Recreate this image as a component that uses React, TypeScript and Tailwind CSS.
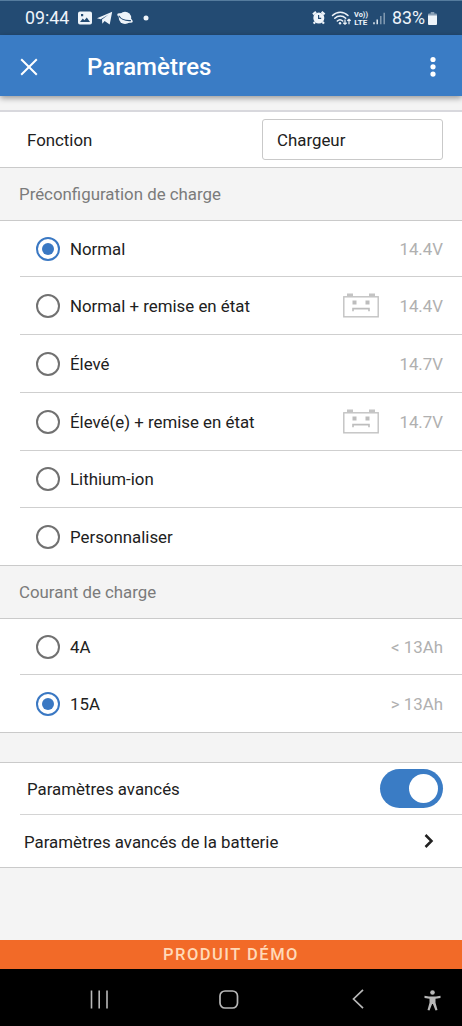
import type { ReactNode } from 'react';

const presets = [
  { label: 'Normal', value: '14.4V', selected: true, height: 'h-14' },
  { label: 'Normal + remise en état', value: '14.4V', recondition: true, height: 'h-[58px]' },
  { label: 'Élevé', value: '14.7V', height: 'h-[58px]' },
  { label: 'Élevé(e) + remise en état', value: '14.7V', recondition: true, height: 'h-[58px]' },
  { label: 'Lithium-ion', height: 'h-[57px]' },
  { label: 'Personnaliser', height: 'h-[58px]' },
];

const currents = [
  { label: '4A', value: '< 13Ah', height: 'h-14' },
  { label: '15A', value: '> 13Ah', selected: true, height: 'h-[58px]' },
];

type Option = {
  label: string;
  value?: string;
  selected?: boolean;
  recondition?: boolean;
  height: string;
};

const BatteryIcon = () => (
  <svg width="36" height="25" viewBox="0 0 36 25" fill="none" className="mr-[20px] shrink-0">
    <rect x="0.8" y="3.8" width="34.4" height="20" stroke="#c2c2c2" strokeWidth="1.4" />
    <path d="M4 0.5h6v3H4zM26 0.5h6v3h-6z" fill="#c4c4c4" />
    <path d="M9.5 7.5h4v4h-4zM22.5 7.5h4v4h-4z" fill="#bdbdbd" />
    <path d="M10 18.2v-2.6h16v2.6" stroke="#bdbdbd" strokeWidth="1.6" />
  </svg>
);

const Radio = ({ selected }: { selected?: boolean }) => (
  <svg width="24" height="24" viewBox="0 0 24 24" fill="none" className="mr-[10px] shrink-0">
    <circle cx="12" cy="12" r="11" stroke={selected ? '#3a78c3' : '#717171'} strokeWidth="2" />
    {selected && <circle cx="12" cy="12" r="6" fill="#3a78c3" />}
  </svg>
);

const SectionTitle = ({ children }: { children: ReactNode }) => (
  <div className="flex h-[53px] items-center border-b border-[#cacaca] bg-[#f4f4f4] pl-[19px] text-[16.85px] text-[#7b7b7b]">
    {children}
  </div>
);

const OptionList = ({ options }: { options: Option[] }) => (
  <div className="border-b border-[#cacaca] bg-white pl-5">
    {options.map((option, index) => (
      <div
        key={option.label}
        className={`flex items-center pr-[19px] pl-4 ${option.height} ${
          index < options.length - 1 ? 'border-b border-[#cfcfcf]' : '-mb-px'
        }`}
      >
        <Radio selected={option.selected} />
        <span className="flex-1">{option.label}</span>
        {option.recondition && <BatteryIcon />}
        <span className="text-[#b0b0b0]">{option.value}</span>
      </div>
    ))}
  </div>
);

const StatusBar = () => (
  <div className="flex h-[35px] items-center border-t border-[#557c9e] bg-[#234b73] pr-[25px] pl-[25px] text-[17.8px] text-[#eef4fa]">
    <span className="w-[53px]">09:44</span>
    <svg width="72" height="14" viewBox="0 0 72 14" fill="#eef4fa">
      <path
        fillRule="evenodd"
        d="M2 0.5h10a2 2 0 0 1 2 2v9a2 2 0 0 1-2 2H2a2 2 0 0 1-2-2v-9a2 2 0 0 1 2-2ZM2 11h10L8.8 6.5 6.4 9.3 4.8 7.6ZM3 3v2.2h2.2V3Z"
      />
      <path d="M19 7.2 34.2 0.8 31.7 13.5 26.6 10.1 24.3 12.7 24 8.4 30.6 3.4 22.7 8.3Z" />
      <ellipse cx="47" cy="7" rx="8.7" ry="2.9" transform="rotate(28 47 7)" />
      <circle cx="47" cy="6.9" r="6.2" />
      <path d="M40.7 4.8c2 3.1 6.5 5.2 12.2 4.8" fill="none" stroke="#234b73" strokeWidth="1.1" />
      <circle cx="68" cy="7" r="2.5" />
    </svg>
    <div className="ml-auto flex items-center">
      <svg width="74" height="16" viewBox="0 0 74 16" fill="none" stroke="#eef4fa">
        <path d="m1 4.4 3-2.6M9.6 1.8l3 2.6M3 12l-1.3 1.6m8.9-1.6 1.3 1.6" strokeWidth="2.2" />
        <circle cx="6.8" cy="8" r="5.5" fill="#eef4fa" stroke="none" />
        <path d="M6.6 5v3.4h2.6" stroke="#234b73" strokeWidth="1.2" />
        <g strokeWidth="1.5" strokeLinecap="round">
          <path d="M20.5 5.5c4.5-4.4 11-4.4 15.5 0M22.8 8.3c3.1-3 7.8-3 10.9 0M25.3 11c1.6-1.5 3.8-1.5 5.4 0" />
        </g>
        <circle cx="28" cy="13.2" r="1.2" fill="#eef4fa" stroke="none" />
        <path d="M33 9.5v4.8m-1.7-1.6 1.7 1.6 1.7-1.6M37 14.3V9m-1.7 1.8L37 9.2l1.7 1.6" strokeWidth="1.2" />
        <g fill="#eef4fa" stroke="none" fontFamily="Roboto" fontWeight="700">
          <text x="42" y="6.6" fontSize="6.6" textLength="14" lengthAdjust="spacingAndGlyphs">Vo))</text>
          <text x="42.3" y="14.8" fontSize="7" textLength="13" lengthAdjust="spacingAndGlyphs">LTE</text>
        </g>
        <path d="M62 14.3v-2M65.2 14.3V9.6" strokeWidth="1.4" />
        <path d="M68.8 14.3V6M72.2 14.3V2.8" strokeWidth="1.4" opacity="0.5" />
      </svg>
      <span className="ml-[6px]">83%</span>
      <svg width="9" height="13" viewBox="0 0 9 13" fill="#eef4fa" className="ml-[3px]">
        <path d="M2.7 0h3.6v1.5H8a1 1 0 0 1 1 1V4H0V2.5a1 1 0 0 1 1-1h1.7Z" opacity="0.5" />
        <path d="M0 3.5h9V12a1 1 0 0 1-1 1H1a1 1 0 0 1-1-1Z" />
      </svg>
    </div>
  </div>
);

const Header = () => (
  <header className="relative flex h-[61px] items-center bg-[#3a7cc5] px-5 pt-0.5 text-white shadow-[0_2px_6px_rgba(0,0,0,0.4)]">
    <svg width="18" height="18" viewBox="0 0 18 18" fill="none" stroke="white" strokeWidth="2">
      <path d="m1.2 1.2 15.6 15.6m0-15.6-15.6 15.6" />
    </svg>
    <h1 className="ml-[49px] flex-1 text-[24px] font-medium">Paramètres</h1>
    <svg width="6" height="22" viewBox="0 0 6 22" fill="white" className="mr-[6px]">
      <circle cx="3" cy="3.5" r="2.6" />
      <circle cx="3" cy="10.8" r="2.6" />
      <circle cx="3" cy="18.1" r="2.6" />
    </svg>
  </header>
);

const NavBar = () => (
  <nav className="flex h-[57px] items-center bg-black pr-[21px] pl-[90px]">
    <svg width="18" height="19" viewBox="0 0 18 19" stroke="#b8b8b8" strokeWidth="1.6" className="mt-[4px]">
      <path d="M1.5 0.5v18M9.2 0.5v18M17 0.5v18" />
    </svg>
    <svg width="20" height="19" viewBox="0 0 20 19" fill="none" stroke="#b8b8b8" strokeWidth="1.7" className="mt-[4px] ml-[111px]">
      <rect x="1" y="1" width="17.5" height="17" rx="5" />
    </svg>
    <svg width="12" height="20" viewBox="0 0 12 20" fill="none" stroke="#b8b8b8" strokeWidth="1.7" className="mt-[3px] ml-[113px]">
      <path d="m11 0.8-9.5 9.2 9.5 9.2" />
    </svg>
    <svg width="17" height="21" viewBox="0 0 17 21" fill="#b8b8b8" className="mt-[6px] ml-auto">
      <circle cx="8.5" cy="2.5" r="2.3" />
      <path d="M0.5 5.8 5 6.5h7l4.5-.7v2.1l-5 .8v4l2 7.2-2 .7-2.6-6.5h-.8l-2.6 6.5-2-.7 2-7.2v-4l-5-.8Z" />
    </svg>
  </nav>
);

const App = () => {
  return (
    <div className="flex h-[1026px] w-[462px] flex-col overflow-hidden bg-[#f4f4f4] font-['Roboto',sans-serif] text-[16.85px] leading-6 text-[#212121]">
      <StatusBar />
      <Header />

      <main className="flex-1">
        <div className="mt-[14px] flex h-[58px] items-center justify-between border-t-2 border-b border-t-[#d8d8dd] border-b-[#cacaca] bg-white pr-[19px] pl-[27px]">
          <span>Fonction</span>
          <div className="flex h-[41px] w-[181px] items-center rounded-[3px] border border-[#c9c9c9] pl-[14px]">
            Chargeur
          </div>
        </div>

        <SectionTitle>Préconfiguration de charge</SectionTitle>
        <OptionList options={presets} />

        <SectionTitle>Courant de charge</SectionTitle>
        <OptionList options={currents} />

        <div className="mt-[29px] border-y border-[#cacaca] bg-white pl-5">
          <div className="flex h-[52px] items-center justify-between border-b border-[#d4d4d4] pr-[19px] pl-[7px]">
            <span>Paramètres avancés</span>
            <button
              type="button"
              role="switch"
              aria-checked="true"
              aria-label="Paramètres avancés"
              className="flex h-[39px] w-[63px] items-center justify-end rounded-full bg-[#3a7cc5] pr-[5px]"
            >
              <span className="size-[29px] rounded-full bg-white" />
            </button>
          </div>
          <div className="flex h-[52px] items-center justify-between pr-[28px] pl-[4px]">
            <span className="pt-0.5">Paramètres avancés de la batterie</span>
            <svg width="10" height="14" viewBox="0 0 10 14" fill="none" stroke="#212121" strokeWidth="2.5">
              <path d="m1.5 1 6 6-6 6" />
            </svg>
          </div>
        </div>
      </main>

      <div className="flex h-[29px] items-center justify-center bg-[#f26a28] text-[16.5px] font-medium tracking-[1.5px] text-[#ffd9b8]">
        PRODUIT DÉMO
      </div>
      <NavBar />
    </div>
  );
};

export default App;
